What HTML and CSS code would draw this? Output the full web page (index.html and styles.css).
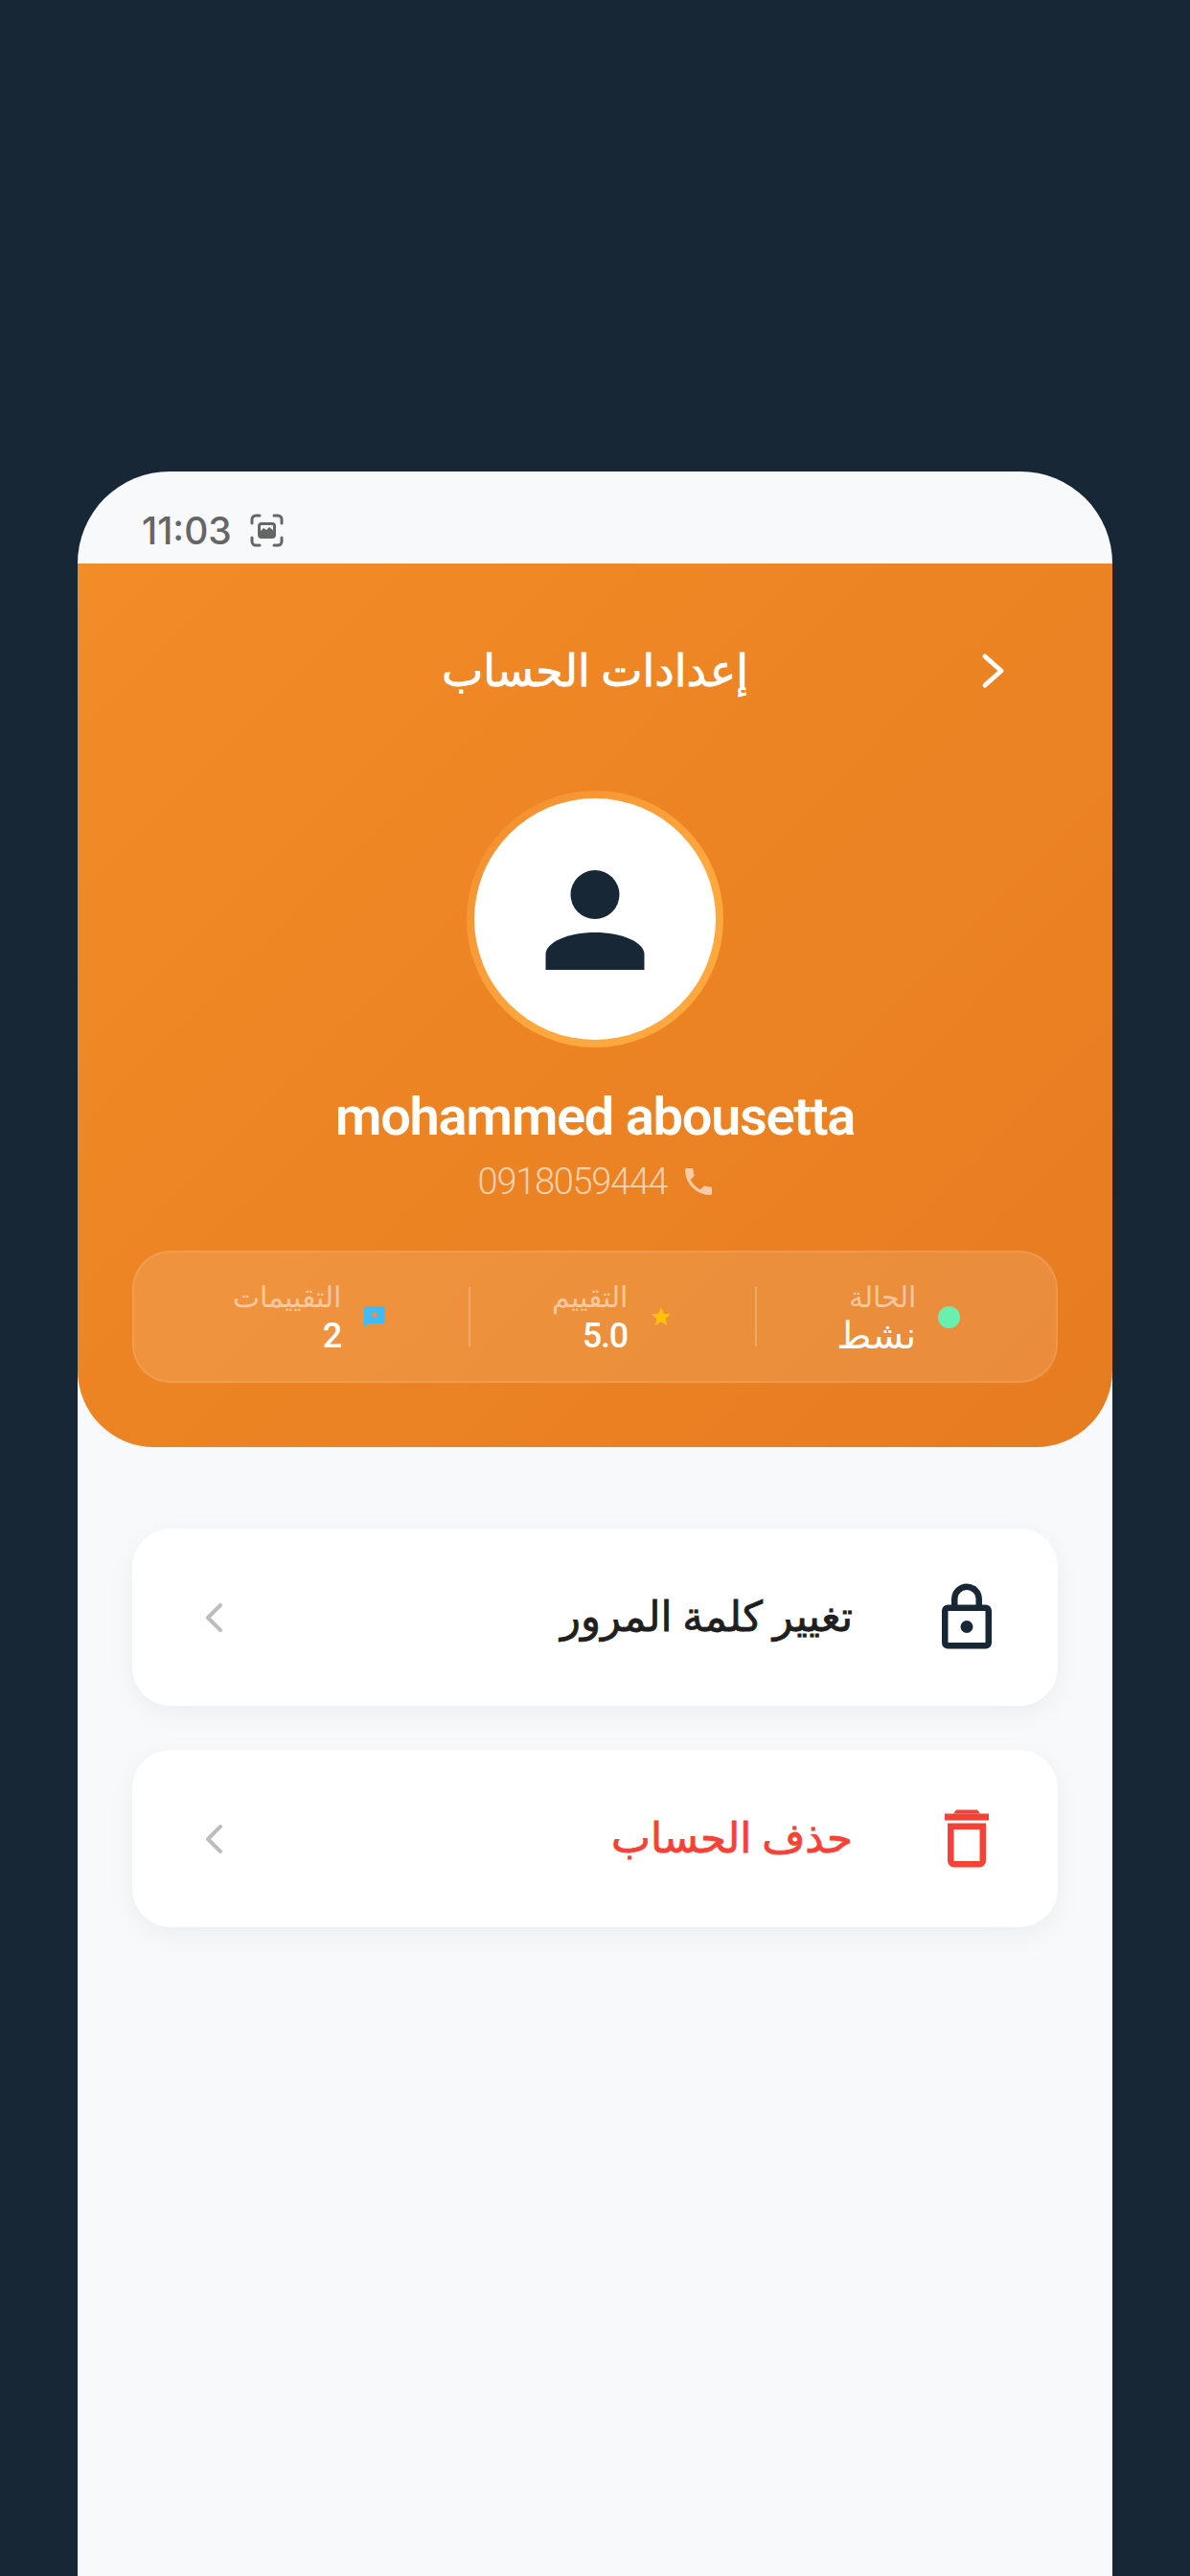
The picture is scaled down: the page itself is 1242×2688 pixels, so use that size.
FILE: index.html
```html
<!DOCTYPE html>
<html lang="ar">
<head>
    <meta charset="UTF-8">
    <meta name="viewport" content="width=device-width, initial-scale=1.0">
    <title>إعدادات الحساب</title>
    <link rel="stylesheet" href="styles.css">
</head>
<body>
    <div class="phone">
        <div class="status-bar">
            <span class="status-time">11:03</span>
            <svg class="status-shot" viewBox="0 0 35 35" fill="none" stroke="#666" stroke-width="3" stroke-linecap="round">
                <path d="M2 10V6a4 4 0 0 1 4-4h4M25 2h4a4 4 0 0 1 4 4v4M33 25v4a4 4 0 0 1-4 4h-4M10 33H6a4 4 0 0 1-4-4v-4"/>
                <rect x="9.5" y="10.5" width="16" height="14" rx="2.5"/>
                <path d="M10 19l4-4 3 2 3-3 5 4v5H10z" fill="#666" stroke="none"/>
            </svg>
        </div>

        <header class="account-header">
            <div class="title-row">
                <h1>إعدادات الحساب</h1>
                <div class="back-btn">
                    <svg viewBox="0 0 25 38" fill="none" stroke="#fff" stroke-width="5" stroke-linecap="round" stroke-linejoin="round">
                        <path d="M4 4l17 15L4 34"/>
                    </svg>
                </div>
            </div>

            <div class="avatar-ring">
                <div class="avatar">
                    <svg viewBox="0 0 104 104" fill="#182736">
                        <circle cx="52" cy="25.5" r="25.5"/>
                        <path d="M0.5 104V88C0.5 75 24 65 52 65s51.500 10 51.500 23v16z"/>
                    </svg>
                </div>
            </div>

            <div class="user-name">mohammed abousetta</div>
            <div class="user-phone">
                <svg viewBox="3 3 18 18" fill="#fff" fill-opacity="0.6">
                    <path d="M6.62 10.79c1.44 2.83 3.76 5.14 6.59 6.59l2.2-2.2c.27-.27.67-.36 1.02-.24 1.12.37 2.33.57 3.57.57.55 0 1 .45 1 1V20c0 .55-.45 1-1 1-9.39 0-17-7.61-17-17 0-.55.45-1 1-1h3.500c.55 0 1 .45 1 1 0 1.250.2 2.450.57 3.570.11.35.03.74-.25 1.020l-2.200 2.200z"/>
                </svg>
                <span>0918059444</span>
            </div>

            <div class="stats">
                <div class="stat stat-status">
                    <span class="status-dot"></span>
                    <div class="stat-text">
                        <div class="stat-label">الحالة</div>
                        <div class="stat-value stat-word">نشط</div>
                    </div>
                </div>
                <div class="stat">
                    <svg class="stat-icon" viewBox="0 0 24 24" fill="#ffc107">
                        <path d="M12 17.270L18.180 21l-1.640-7.030L22 9.240l-7.190-.61L12 2 9.190 8.630 2 9.240l5.460 4.730L5.820 21z"/>
                    </svg>
                    <div class="stat-text">
                        <div class="stat-label">التقييم</div>
                        <div class="stat-value">5.0</div>
                    </div>
                </div>
                <div class="stat">
                    <svg class="stat-icon" viewBox="0 0 24 24" fill="#3fbcf6" fill-rule="evenodd">
                        <path d="M3 1h18a2 2 0 0 1 2 2v14a2 2 0 0 1-2 2H6l-3 3-2 1V3a2 2 0 0 1 2-2zM12 5.500l1.400 3.100 3.100 1.400-3.100 1.400-1.400 3.100-1.400-3.100L7.500 10l3.100-1.400z"/>
                    </svg>
                    <div class="stat-text">
                        <div class="stat-label">التقييمات</div>
                        <div class="stat-value">2</div>
                    </div>
                </div>
            </div>
        </header>

        <div class="menu">
            <div class="menu-item">
                <svg class="menu-icon" viewBox="0 1.5 52 68" fill="none" stroke="#182736" stroke-width="6.500">
                    <path d="M13.250 24V16a12.750 12.750 0 0 1 25.500 0V24"/>
                    <rect x="3.250" y="25.250" width="45.500" height="39.500" rx="3"/>
                    <circle cx="26" cy="45" r="6.500" fill="#182736" stroke="none"/>
                </svg>
                <span class="menu-label">تغيير كلمة المرور</span>
                <svg class="menu-arrow" viewBox="0 0 18 30" fill="none" stroke="#bdbdbd" stroke-width="4" stroke-linecap="round" stroke-linejoin="round">
                    <path d="M16 2L3 15l13 13"/>
                </svg>
            </div>
            <div class="menu-item danger">
                <svg class="menu-icon" viewBox="0 0 52 68" fill="none" stroke="#f44336" stroke-width="6.500">
                    <path d="M3 11h46" stroke-width="7"/>
                    <path d="M12 7.500l3-4h22l3 4z" fill="#f44336" stroke="none"/>
                    <path d="M9.250 20.750h33.500v36a3.500 3.500 0 0 1-3.500 3.500h-26.500a3.500 3.500 0 0 1-3.500-3.500z"/>
                </svg>
                <span class="menu-label">حذف الحساب</span>
                <svg class="menu-arrow" viewBox="0 0 18 30" fill="none" stroke="#bdbdbd" stroke-width="4" stroke-linecap="round" stroke-linejoin="round">
                    <path d="M16 2L3 15l13 13"/>
                </svg>
            </div>
        </div>
    </div>
</body>
</html>
```

FILE: styles.css
```css
* {
    margin: 0;
    padding: 0;
    box-sizing: border-box;
}

body {
    background-color: #182736;
    height: 2688px;
    padding: 492px 81px 0;
    overflow: hidden;
    font-family: Roboto, "DejaVu Sans", sans-serif;
}

.phone {
    direction: rtl;
    height: 2196px;
    background-color: #f8f9fb;
    border-radius: 96px 96px 0 0;
    overflow: hidden;
}

/* status bar stays left to right */
.status-bar {
    direction: ltr;
    height: 96px;
    display: flex;
    align-items: center;
    gap: 19px;
    padding: 26px 0 0 67px;
}

.status-time {
    font-family: Inter, "Liberation Sans", sans-serif;
    font-size: 39px;
    font-weight: 500;
    color: #666;
}

.status-shot {
    width: 35px;
    height: 35px;
}

.account-header {
    height: 922px;
    padding: 64px 57px 0;
    display: flex;
    flex-direction: column;
    align-items: center;
    background: linear-gradient(135deg, #f38b27 0%, #e67c20 100%);
    border-radius: 0 0 80px 80px;
}

.title-row {
    width: 100%;
    height: 96px;
    display: grid;
    grid-template-columns: 1fr auto 1fr;
    align-items: center;
}

.title-row h1 {
    grid-column: 2;
    grid-row: 1;
    font-size: 46px;
    font-weight: 400;
    -webkit-text-stroke: 0.8px #fff;
    color: #fff;
}

.back-btn {
    grid-column: 1;
    grid-row: 1;
    padding-right: 55px;
    display: flex;
}

.back-btn svg {
    width: 25px;
    height: 38px;
}

.avatar-ring {
    width: 268px;
    height: 268px;
    margin-top: 77px;
    padding: 8px;
    border-radius: 50%;
    background: linear-gradient(135deg, #f39030 10%, #ffa83e 60%);
}

.avatar {
    width: 252px;
    height: 252px;
    padding-top: 75px;
    display: flex;
    justify-content: center;
    background-color: #fff;
    border-radius: 50%;
}

.avatar svg {
    width: 104px;
    height: 104px;
}

.user-name {
    margin-top: 38px;
    direction: ltr;
    font-family: Roboto, sans-serif;
    font-size: 56px;
    font-weight: 600;
    letter-spacing: -1.3px;
    line-height: 68px;
    color: #fff;
}

.user-phone {
    margin-top: 9px;
    display: flex;
    align-items: center;
    gap: 19px;
    height: 50px;
    color: rgba(255, 255, 255, 0.65);
    font-size: 38px;
    font-weight: 300;
    letter-spacing: -1.3px;
}

.user-phone svg {
    width: 28px;
    height: 28px;
}

.stats {
    width: 100%;
    height: 138px;
    margin-top: 47px;
    display: grid;
    grid-template-columns: 314px 299px 1fr;
    align-items: center;
    background-color: rgba(255, 255, 255, 0.12);
    border: 2px solid rgba(255, 255, 255, 0.1);
    border-radius: 40px;
}

.stat {
    height: 62px;
    display: flex;
    align-items: center;
    gap: 23px;
    padding-right: 86px;
    border-left: 2px solid rgba(255, 255, 255, 0.22);
}

.stat-status {
    padding-right: 100px;
}

.stat:last-child {
    border-left: 0;
}

.status-dot {
    width: 23px;
    height: 23px;
    border-radius: 50%;
    background-color: #69f0ae;
}

.stat-icon {
    width: 24px;
    height: 24px;
}

.stat-text {
    display: flex;
    flex-direction: column;
    gap: 4px;
}

.stat-label {
    font-size: 30px;
    font-weight: 300;
    line-height: 36px;
    color: rgba(255, 255, 255, 0.5);
}

.stat-value {
    font-size: 36px;
    font-weight: 500;
    letter-spacing: -1.2px;
    line-height: 36px;
    color: #fff;
}

.stat-word {
    font-size: 39px;
    letter-spacing: 0;
}

.menu {
    display: flex;
    flex-direction: column;
    gap: 46px;
    padding: 85px 57px 0;
}

.menu-item {
    height: 185px;
    display: flex;
    align-items: center;
    gap: 93px;
    padding: 0 69px 0 76px;
    background-color: #fff;
    border-radius: 40px;
    box-shadow: 0 8px 30px rgba(0, 0, 0, 0.05);
}

.menu-icon {
    width: 52px;
    height: 68px;
    overflow: visible;
}

.menu-label {
    flex: 1;
    font-size: 43.5px;
    font-weight: 400;
    -webkit-text-stroke: 0.8px currentColor;
    color: #1f1f1f;
}

.danger .menu-label {
    color: #f44336;
}

.menu-arrow {
    width: 18px;
    height: 30px;
}
```
